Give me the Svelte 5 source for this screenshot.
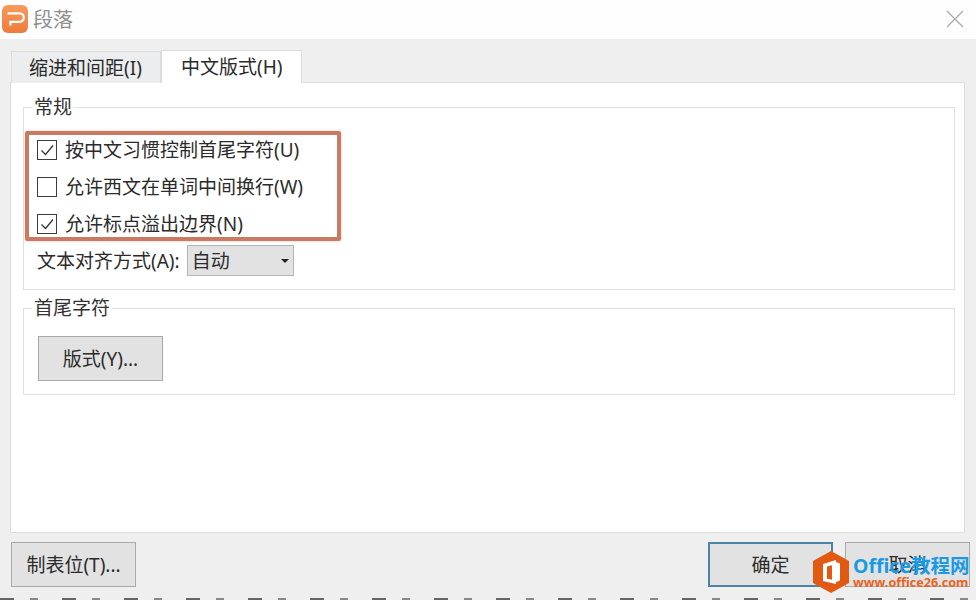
<script lang="ts">
	const options = [
		{ label: '按中文习惯控制首尾字符(U)', checked: true },
		{ label: '允许西文在单词中间换行(W)', checked: false },
		{ label: '允许标点溢出边界(N)', checked: true }
	];
</script>

<div class="dialog">
	<header class="titlebar">
		<span class="app-icon">
			<svg viewBox="0 0 28 28" width="26" height="26">
				<path d="M6 8h13a4.500 4.500 0 0 1 0 9H9v4M6 8" fill="none" stroke="#fff" stroke-width="2.400" />
			</svg>
		</span>
		<span class="title">段落</span>
		<svg class="close" viewBox="0 0 18 18" width="18" height="18">
			<path d="M1 1l16 16M17 1L1 17" stroke="#a8a8a8" stroke-width="1.200" fill="none" />
		</svg>
	</header>

	<div class="body">
		<div class="tabs">
			<div class="tab">缩进和间距(I)</div>
			<div class="tab active">中文版式(H)</div>
		</div>

		<div class="panel">
			<fieldset class="general">
				<legend>常规</legend>
				<div class="options">
					{#each options as opt}
						<label class="option">
							<span class="box">
								{#if opt.checked}
									<svg viewBox="0 0 20 20" width="20" height="20">
										<path d="M4.500 10.500l4 4 7.500-9" fill="none" stroke="#333" stroke-width="1.300" />
									</svg>
								{/if}
							</span>
							{opt.label}
						</label>
					{/each}
				</div>
				<div class="align-row">
					<span>文本对齐方式(A):</span>
					<span class="select">自动<i class="caret"></i></span>
				</div>
			</fieldset>

			<fieldset class="edges">
				<legend>首尾字符</legend>
				<button class="btn">版式(Y)...</button>
			</fieldset>
		</div>

		<footer class="footer">
			<button class="btn">制表位(T)...</button>
			<div class="right">
				<button class="btn primary">确定</button>
				<button class="btn">取消</button>
			</div>
		</footer>
	</div>

	<div class="highlight"></div>

	<div class="watermark">
		<svg viewBox="0 0 36 42" width="36" height="42">
			<path d="M18 0l18 10v22L18 42 0 32V10z" fill="#e25a12" />
			<path d="M10 13l13-4v24l-13-3z" fill="#fff" />
			<path d="M14 15.500l5-1.200v14.500l-5-1z" fill="#e25a12" />
			<path d="M23 11l4 1.500v17L23 31z" fill="#fff" />
		</svg>
		<div class="wm-text">
			<div class="wm-top">Office教程网</div>
			<div class="wm-url">www.office26.com</div>
		</div>
	</div>

	<div class="strip"></div>
</div>

<style>
	:global(body) {
		margin: 0;
	}

	.dialog {
		position: relative;
		width: 976px;
		height: 600px;
		overflow: hidden;
		background: #efeff0;
		color: #2b2b2b;
		font-family: 'Noto Sans', 'Noto Sans CJK SC', sans-serif;
		font-size: 19px;
		line-height: 26px;
	}

	.titlebar {
		display: flex;
		align-items: center;
		height: 39px;
		padding: 0 12px 0 2px;
		background: #fefefe;
		box-sizing: border-box;
	}

	.app-icon {
		display: flex;
		width: 26px;
		height: 28px;
		margin-top: -2px;
		border-radius: 6px;
		background: linear-gradient(#f79a5c, #ee7b3c);
		align-items: center;
		justify-content: center;
	}

	.title {
		margin-left: 5px;
		color: #8f8f8f;
		font-size: 20px;
	}

	.close {
		margin-left: auto;
		margin-top: -1px;
	}

	.body {
		padding: 11px 11px 0 10px;
	}

	.tabs {
		display: flex;
		height: 32px;
		padding-left: 1px;
	}

	.tab {
		box-sizing: border-box;
		width: 150px;
		height: 32px;
		margin-top: 1px;
		padding: 3px 0 0 17px;
		border: 1px solid #dcdcdc;
		border-bottom: 0;
		background: #ecedef;
	}

	.tab.active {
		width: 141px;
		margin-top: 0;
		padding-left: 19px;
		height: 33px;
		background: #fff;
		position: relative;
		z-index: 1;
	}

	.panel {
		box-sizing: border-box;
		height: 451px;
		padding: 12px 9px 0 12px;
		border: 1px solid #dcdcdc;
		background: #fff;
	}

	fieldset {
		margin: 0;
		padding: 0;
		border: 1px solid #dfdfe2;
		min-width: 0;
	}

	legend {
		margin-left: 8px;
		padding: 0 2px;
		line-height: 24px;
		color: #333;
	}

	.general {
		height: 195px;
		box-sizing: border-box;
		margin-bottom: 6px;
	}

	.edges {
		height: 99px;
		box-sizing: border-box;
	}

	.options {
		display: flex;
		flex-direction: column;
		gap: 11px;
		padding: 18px 0 0 13px;
	}

	.option {
		display: flex;
		align-items: center;
		height: 26px;
		gap: 8px;
	}

	.box {
		box-sizing: border-box;
		display: block;
		width: 20px;
		height: 20px;
		border: 1px solid #3c3c3c;
		background: #fff;
	}

	.box svg {
		display: block;
		margin: -1px;
	}

	.align-row {
		display: flex;
		align-items: center;
		gap: 7px;
		margin: 8px 0 0 13px;
	}

	.select {
		box-sizing: border-box;
		display: flex;
		align-items: center;
		width: 107px;
		height: 31px;
		padding-left: 4px;
		border: 1px solid #b5b5b5;
		background: #e2e2e2;
	}

	.caret {
		margin-left: auto;
		margin-right: 4px;
		border: 4px solid transparent;
		border-top: 4px solid #222;
		border-bottom: 0;
	}

	.btn {
		box-sizing: border-box;
		width: 125px;
		height: 45px;
		padding: 0;
		border: 1px solid #a9a9a9;
		background: #e2e2e3;
		color: #2b2b2b;
		font: inherit;
	}

	.edges .btn {
		display: block;
		margin: 16px 0 0 14px;
	}

	.footer {
		display: flex;
		justify-content: space-between;
		margin: 9px -5px 0 1px;
	}

	.right {
		display: flex;
		gap: 12px;
	}

	.btn.primary {
		border: 2px solid #4a83a4;
	}

	.highlight {
		position: absolute;
		left: 25px;
		top: 131px;
		width: 308px;
		height: 102px;
		border: 4px solid #c97a62;
		border-radius: 2px;
		box-shadow: 0 0 3px #f0c8b8;
	}

	.watermark {
		position: absolute;
		left: 813px;
		top: 551px;
		display: flex;
		gap: 4px;
	}

	.wm-text {
		font-weight: 700;
		white-space: nowrap;
	}

	.wm-top {
		margin-top: 3px;
		color: #1b9ae4;
		font-size: 19.500px;
		line-height: 24px;
	}

	.wm-url {
		margin-top: -3px;
		color: #e8641e;
		font-size: 12.600px;
		line-height: 16px;
	}

	.strip {
		position: absolute;
		left: 0;
		right: 0;
		bottom: 0;
		height: 2px;
		background: repeating-linear-gradient(90deg, #666 0 14px, transparent 14px 30px, #888 30px 38px, transparent 38px 62px);
	}
</style>
